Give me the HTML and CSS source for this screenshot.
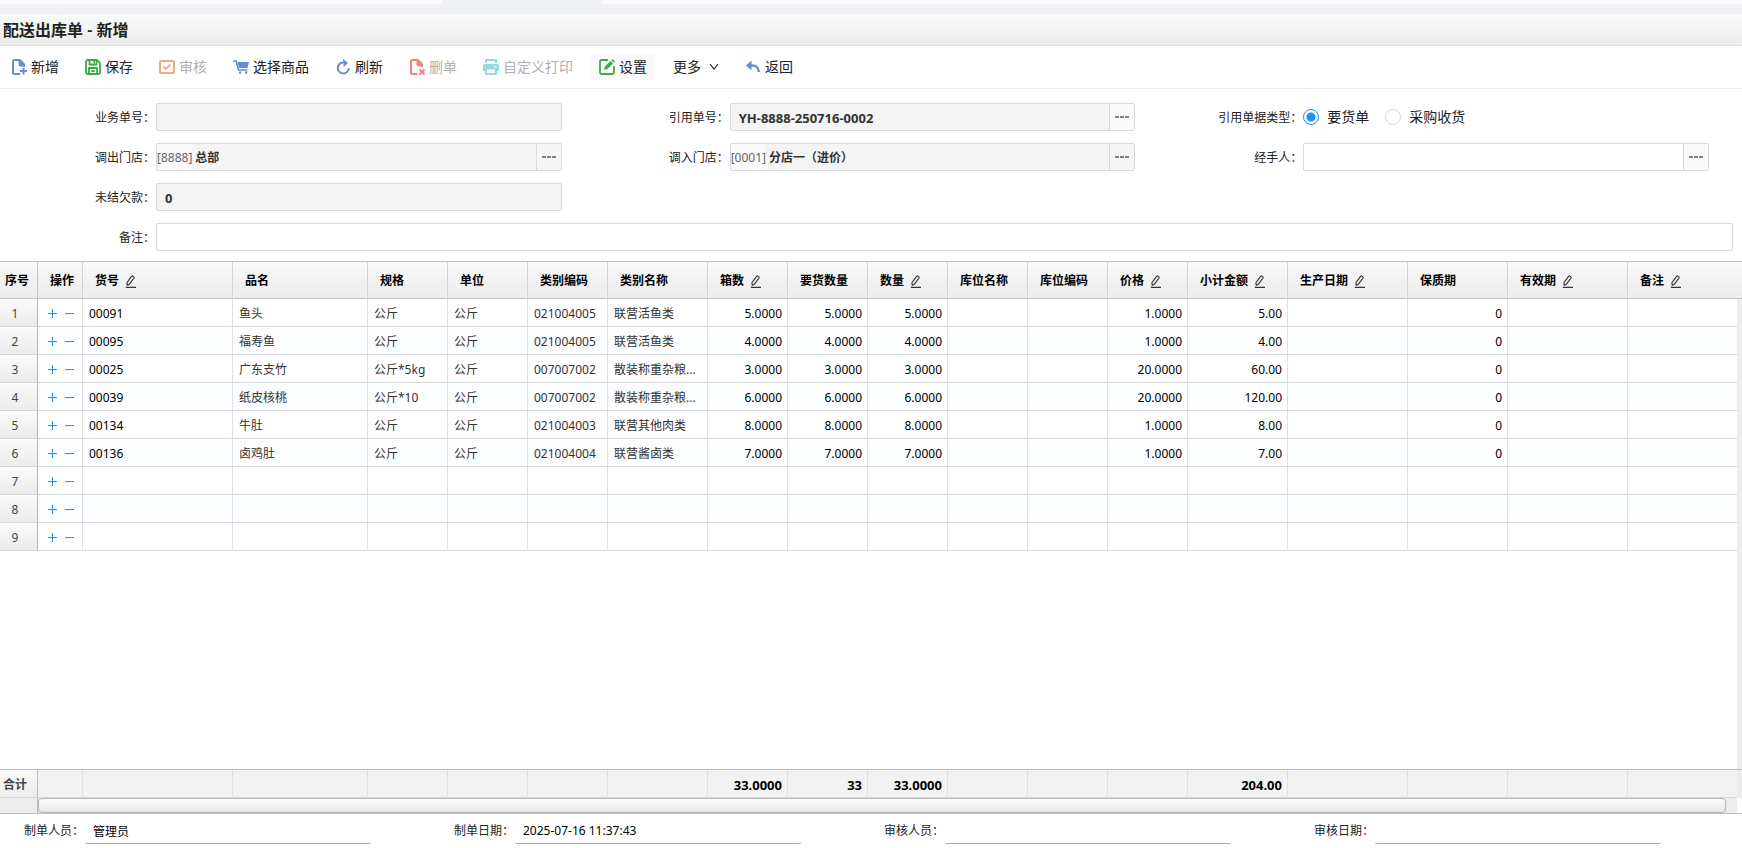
FILE: index.html
```html
<!DOCTYPE html>
<html lang="zh-CN">
<head>
<meta charset="utf-8">
<title>配送出库单 - 新增</title>
<link rel="stylesheet" href="styles.css">
</head>
<body>
<svg class="defs" aria-hidden="true">
  <symbol id="pencil" viewBox="0 0 12 13"><path d="M2.2 10.2 1.9 7.6 6.6 1.3q.5-.6 1.2-.2l1 .7q.6.5.2 1.2L4.400 9.200z M.8 12.400H11" fill="none" stroke="currentColor" stroke-width="1.100"/></symbol>
  <symbol id="plus" viewBox="0 0 9 9"><path d="M0 4.500H9M4.500 0V9" stroke="currentColor"/></symbol>
  <symbol id="minus" viewBox="0 0 9 9"><path d="M0 4.500H9" stroke="currentColor"/></symbol>
  <symbol id="dots" viewBox="0 0 14 2"><path d="M0 0h4v2H0zM5 0h4v2H5zM10 0h4v2h-4z" fill="currentColor"/></symbol>
</svg>

<nav class="tabs"><span class="tabs-left"></span><span class="tabs-active"></span><span class="tabs-right"></span></nav>
<header class="title"><h1>配送出库单 - 新增</h1></header>

<div class="toolbar">
  <button class="tool blue"><svg viewBox="0 0 16 16"><path d="M9 15H3.500Q2 15 2 13.500V2.500Q2 1 3.500 1H8.500L13 5.500V8" fill="none" stroke="currentColor" stroke-width="2"/><path d="M7.500 0H9l5 5v2.500H10Q7.500 7.500 7.500 5zM11.500 9h2v2H16v2h-2.500v2.500h-2V13H9v-2h2.500z" fill="currentColor"/></svg><span>新增</span></button>
  <button class="tool green"><svg viewBox="0 0 16 16"><path d="M1 3Q1 1 3 1H12L15 4V13Q15 15 13 15H3Q1 15 1 13zM4.500 1V5.500H11.500V1M4 15V9H12V15M6.500 12H9.500" fill="none" stroke="currentColor" stroke-width="1.800"/><path d="M8.500 2h1.500v2.500H8.500z" fill="currentColor"/></svg><span>保存</span></button>
  <button class="tool orange" disabled><svg viewBox="0 0 16 16"><rect x="1" y="2" width="14" height="12" rx="1" fill="none" stroke="currentColor" stroke-width="2"/><path d="M4.500 7.500 7 10l4.500-4.500" fill="none" stroke="currentColor" stroke-width="1.800"/></svg><span>审核</span></button>
  <button class="tool blue"><svg viewBox="0 0 16 16"><path d="M0 2H3.200L5.500 11H14.500" fill="none" stroke="currentColor" stroke-width="1.600"/><path d="M4.500 3H16L14.500 9H6zM6 12.500h2.200v2.200H6zM12 12.500h2.200v2.200H12z" fill="currentColor"/></svg><span>选择商品</span></button>
  <button class="tool blue"><svg viewBox="0 0 16 16"><path d="M10 3.500H8A5.500 5.500 0 1 0 13.800 9" fill="none" stroke="currentColor" stroke-width="2"/><path d="M8 0 13 4 8.500 8V5l1.500-1.500L8 2z" fill="currentColor"/></svg><span>刷新</span></button>
  <button class="tool red" disabled><svg viewBox="0 0 16 16"><path d="M8.500 15H3.500Q2 15 2 13.500V2.500Q2 1 3.500 1H8.500L13 5.500V8" fill="none" stroke="currentColor" stroke-width="2"/><path d="M7.500 0H9l5 5v2.500H10Q7.500 7.500 7.500 5z" fill="currentColor"/><path d="M10.500 10.500l5 5M15.500 10.500l-5 5" stroke="currentColor" stroke-width="2"/></svg><span>删单</span></button>
  <button class="tool teal" disabled><svg viewBox="0 0 16 16"><path d="M2 0H14V4H2zM4 2V4H12V2zM2 5H14Q16 5 16 7V12H14V16H2V12H0V7Q0 5 2 5zM4 10.500V14H12V10.500zM11.500 7v1.500h2V7z" fill="currentColor" fill-rule="evenodd"/></svg><span>自定义打印</span></button>
  <button class="tool green hover"><svg viewBox="0 0 16 16"><path d="M9 1H2.500Q1 1 1 2.500V13.500Q1 15 2.500 15H13.500Q15 15 15 13.500V7" fill="none" stroke="currentColor" stroke-width="1.800"/><path d="M5 11 6 7.500 11.500 2 14 4.500 8.500 10zM12.300 1.200 13.500 0 16 2.500 14.800 3.700z" fill="currentColor"/></svg><span>设置</span></button>
  <button class="tool more"><span>更多</span><svg viewBox="0 0 10 10"><path d="M1 2 5 7 9 2" fill="none" stroke="currentColor" stroke-width="1.200"/></svg></button>
  <button class="tool blue"><svg viewBox="0 0 16 16"><path d="M1 6.500 6.500 1.500V11.500z" fill="currentColor"/><path d="M6 6.500Q13.500 6 13.800 13" fill="none" stroke="currentColor" stroke-width="2.400"/></svg><span>返回</span></button>
</div>

<form class="form">
  <div class="field"><label for="f1">业务单号：</label><div class="box off"><input id="f1" readonly></div></div>
  <div class="field"><label for="f2">引用单号：</label><div class="box off"><input id="f2" class="figure" value="YH-8888-250716-0002" readonly><button type="button" class="pick" aria-label="选择"><svg><use href="#dots"/></svg></button></div></div>
  <div class="field"><span class="lbl">引用单据类型：</span><div class="radios"><label><input type="radio" name="t" checked>要货单</label><label><input type="radio" name="t">采购收货</label></div></div>
  <div class="field"><label for="f3">调出门店：</label><div class="box off"><span class="code">[8888]</span><input id="f3" class="near" value="总部" readonly><button type="button" class="pick grey" aria-label="选择"><svg><use href="#dots"/></svg></button></div></div>
  <div class="field"><label for="f4">调入门店：</label><div class="box off"><span class="code">[0001]</span><input id="f4" class="near" value="分店一（进价）" readonly><button type="button" class="pick grey" aria-label="选择"><svg><use href="#dots"/></svg></button></div></div>
  <div class="field"><label for="f5">经手人：</label><div class="box"><input id="f5"><button type="button" class="pick" aria-label="选择"><svg><use href="#dots"/></svg></button></div></div>
  <div class="field first"><label for="f6">未结欠款：</label><div class="box off"><input id="f6" class="figure" value="0" readonly></div></div>
  <div class="field wide"><label for="f7">备注：</label><div class="box"><input id="f7"></div></div>
</form>

<main class="grid">
<table>
<colgroup><col class="c-no"><col class="c-op"><col class="c-150"><col class="c-135"><col class="c-80"><col class="c-80"><col class="c-80"><col class="c-100"><col class="c-80"><col class="c-80"><col class="c-80"><col class="c-80"><col class="c-80"><col class="c-80"><col class="c-100"><col class="c-120"><col class="c-100"><col class="c-120"><col><col class="c-gut"></colgroup>
<thead><tr><th class="no">序号</th><th>操作</th><th>货号<svg><use href="#pencil"/></svg></th><th>品名</th><th>规格</th><th>单位</th><th>类别编码</th><th>类别名称</th><th>箱数<svg><use href="#pencil"/></svg></th><th>要货数量</th><th>数量<svg><use href="#pencil"/></svg></th><th>库位名称</th><th>库位编码</th><th>价格<svg><use href="#pencil"/></svg></th><th>小计金额<svg><use href="#pencil"/></svg></th><th>生产日期<svg><use href="#pencil"/></svg></th><th>保质期</th><th>有效期<svg><use href="#pencil"/></svg></th><th class="last">备注<svg><use href="#pencil"/></svg></th><th class="last"></th></tr></thead>
<tbody>
<tr><td class="no">1</td><td class="op"><button aria-label="增行"><svg><use href="#plus"/></svg></button><button aria-label="删行"><svg><use href="#minus"/></svg></button></td><td class="ed">00091</td><td>鱼头</td><td>公斤</td><td>公斤</td><td>021004005</td><td>联营活鱼类</td><td class="num">5.0000</td><td class="num">5.0000</td><td class="num">5.0000</td><td></td><td></td><td class="num">1.0000</td><td class="num">5.00</td><td></td><td class="num">0</td><td></td><td class="last"></td><td class="gut" rowspan="9"></td></tr>
<tr><td class="no">2</td><td class="op"><button aria-label="增行"><svg><use href="#plus"/></svg></button><button aria-label="删行"><svg><use href="#minus"/></svg></button></td><td class="ed">00095</td><td>福寿鱼</td><td>公斤</td><td>公斤</td><td>021004005</td><td>联营活鱼类</td><td class="num">4.0000</td><td class="num">4.0000</td><td class="num">4.0000</td><td></td><td></td><td class="num">1.0000</td><td class="num">4.00</td><td></td><td class="num">0</td><td></td><td class="last"></td></tr>
<tr><td class="no">3</td><td class="op"><button aria-label="增行"><svg><use href="#plus"/></svg></button><button aria-label="删行"><svg><use href="#minus"/></svg></button></td><td class="ed">00025</td><td>广东支竹</td><td>公斤*5kg</td><td>公斤</td><td>007007002</td><td>散装称重杂粮...</td><td class="num">3.0000</td><td class="num">3.0000</td><td class="num">3.0000</td><td></td><td></td><td class="num">20.0000</td><td class="num">60.00</td><td></td><td class="num">0</td><td></td><td class="last"></td></tr>
<tr><td class="no">4</td><td class="op"><button aria-label="增行"><svg><use href="#plus"/></svg></button><button aria-label="删行"><svg><use href="#minus"/></svg></button></td><td class="ed">00039</td><td>纸皮核桃</td><td>公斤*10</td><td>公斤</td><td>007007002</td><td>散装称重杂粮...</td><td class="num">6.0000</td><td class="num">6.0000</td><td class="num">6.0000</td><td></td><td></td><td class="num">20.0000</td><td class="num">120.00</td><td></td><td class="num">0</td><td></td><td class="last"></td></tr>
<tr><td class="no">5</td><td class="op"><button aria-label="增行"><svg><use href="#plus"/></svg></button><button aria-label="删行"><svg><use href="#minus"/></svg></button></td><td class="ed">00134</td><td>牛肚</td><td>公斤</td><td>公斤</td><td>021004003</td><td>联营其他肉类</td><td class="num">8.0000</td><td class="num">8.0000</td><td class="num">8.0000</td><td></td><td></td><td class="num">1.0000</td><td class="num">8.00</td><td></td><td class="num">0</td><td></td><td class="last"></td></tr>
<tr><td class="no">6</td><td class="op"><button aria-label="增行"><svg><use href="#plus"/></svg></button><button aria-label="删行"><svg><use href="#minus"/></svg></button></td><td class="ed">00136</td><td>卤鸡肚</td><td>公斤</td><td>公斤</td><td>021004004</td><td>联营酱卤类</td><td class="num">7.0000</td><td class="num">7.0000</td><td class="num">7.0000</td><td></td><td></td><td class="num">1.0000</td><td class="num">7.00</td><td></td><td class="num">0</td><td></td><td class="last"></td></tr>
<tr><td class="no">7</td><td class="op"><button aria-label="增行"><svg><use href="#plus"/></svg></button><button aria-label="删行"><svg><use href="#minus"/></svg></button></td><td></td><td></td><td></td><td></td><td></td><td></td><td></td><td></td><td></td><td></td><td></td><td></td><td></td><td></td><td></td><td></td><td class="last"></td></tr>
<tr><td class="no">8</td><td class="op"><button aria-label="增行"><svg><use href="#plus"/></svg></button><button aria-label="删行"><svg><use href="#minus"/></svg></button></td><td></td><td></td><td></td><td></td><td></td><td></td><td></td><td></td><td></td><td></td><td></td><td></td><td></td><td></td><td></td><td></td><td class="last"></td></tr>
<tr><td class="no">9</td><td class="op"><button aria-label="增行"><svg><use href="#plus"/></svg></button><button aria-label="删行"><svg><use href="#minus"/></svg></button></td><td></td><td></td><td></td><td></td><td></td><td></td><td></td><td></td><td></td><td></td><td></td><td></td><td></td><td></td><td></td><td></td><td class="last"></td></tr>
</tbody>
</table>
</main>

<section class="totals">
<table>
<colgroup><col class="c-no"><col class="c-op"><col class="c-150"><col class="c-135"><col class="c-80"><col class="c-80"><col class="c-80"><col class="c-100"><col class="c-80"><col class="c-80"><col class="c-80"><col class="c-80"><col class="c-80"><col class="c-80"><col class="c-100"><col class="c-120"><col class="c-100"><col class="c-120"><col><col class="c-gut"></colgroup>
<tbody><tr><td class="no">合计</td><td></td><td></td><td></td><td></td><td></td><td></td><td></td><td class="num">33.0000</td><td class="num">33</td><td class="num">33.0000</td><td></td><td></td><td></td><td class="num">204.00</td><td></td><td></td><td></td><td class="last"></td><td class="gut"></td></tr></tbody>
</table>
<div class="scroll"><div class="corner"></div><div class="track"><div class="thumb"></div></div></div>
</section>

<footer class="meta">
  <div><label for="m1">制单人员：</label><input id="m1" value="管理员"></div>
  <div><label for="m2">制单日期：</label><input id="m2" value="2025-07-16 11:37:43"></div>
  <div><label for="m3">审核人员：</label><input id="m3"></div>
  <div><label for="m4">审核日期：</label><input id="m4"></div>
</footer>
</body>
</html>
```

FILE: styles.css
```css
* { box-sizing: border-box; }
body {
  margin: 0;
  min-height: 100vh;
  display: flex;
  flex-direction: column;
  background: #fff;
  color: #222;
  font: 12px/18px "Noto Sans", "Noto Sans CJK SC", sans-serif;
}
button, input { font: inherit; color: inherit; }
button { border: 0; padding: 0; background: none; }
.defs { position: absolute; width: 0; height: 0; }

/* tab strip and title */
.tabs { display: flex; height: 14px; background: #eff1f5; }
.tabs span { height: 4px; }
.tabs-left { width: 442px; background: #fafaf8; }
.tabs-active { width: 159px; }
.tabs-right { flex: 1; background: #fafaf8; }
.title {
  height: 32px;
  padding: 1px 3px 0;
  background: linear-gradient(#f9fafa, #ececec);
  border-bottom: 1px solid #dcdcdc;
}
.title h1 { margin: 0; font-size: 16px; line-height: 30px; font-weight: 600; }

/* toolbar */
.toolbar {
  display: flex;
  align-items: center;
  gap: 10px;
  height: 43px;
  padding: 0 3px;
  border-bottom: 1px solid #ededed;
}
.tool {
  display: flex;
  align-items: center;
  gap: 4px;
  height: 26px;
  padding: 0 8px;
  font-size: 14px;
  line-height: 20px;
}
.tool svg { width: 16px; height: 16px; }
.tool.more { gap: 8px; }
.tool.more svg { width: 10px; height: 10px; }
.tool:disabled span { color: #b0b0b0; }
.hover { background: #fafafa; border-radius: 2px; }
.blue svg { color: #6b8bd9; }
.green svg { color: #3ea948; }
.orange svg { color: #f2a983; }
.red svg { color: #f08484; }
.teal svg { color: #98d8e2; }

/* form */
.form {
  display: grid;
  grid-template-columns: repeat(3, 1fr);
  row-gap: 12px;
  padding: 14px 21px 10px 0;
}
.field { display: flex; align-items: center; height: 28px; padding-right: 12px; }
.field > label, .lbl { width: 156px; padding: 2px 1px 0 0; text-align: right; flex: none; }
.field.first { grid-column: 1; }
.field.wide { grid-column: 1 / -1; padding-right: 0; margin-right: -12px; }
.box {
  flex: 1;
  min-width: 0;
  display: flex;
  height: 28px;
  border: 1px solid #d9d9d9;
  border-radius: 2px;
  background: #fff;
}
.box.off { background: #f4f4f4; }
.box input {
  flex: 1;
  min-width: 0;
  border: 0;
  outline: 0;
  background: none;
  padding: 2px 8px 0;
  font-weight: 700;
  color: #333;
}
.box input.near { padding-left: 3px; }
.box input.figure { font-size: 13px; }
.code { padding-top: 1px; background: #fafafa; color: #666; line-height: 25px; }
.pick {
  width: 25px;
  border-left: 1px solid #d9d9d9;
  background: #fafafa;
  color: #808080;
  display: flex;
  align-items: center;
  justify-content: center;
}
.pick.grey { background: #f5f5f5; }
.pick svg { width: 14px; height: 2px; }
.radios { display: flex; gap: 16px; font-size: 14px; line-height: 20px; }
.radios label { display: flex; align-items: center; gap: 8px; }
.radios input {
  appearance: none;
  width: 16px;
  height: 16px;
  margin: 0;
  border: 1px solid #d9d9d9;
  border-radius: 50%;
}
.radios input:checked {
  border-color: #1890ff;
  background: radial-gradient(circle, #1890ff 4px, #fff 5px);
}

/* data grid */
.grid {
  flex: 1;
  border-top: 1px solid #bfc5c7;
  background: linear-gradient(#ececec, #ececec) right / 5px 100% no-repeat;
}
table { width: 100%; table-layout: fixed; border-collapse: separate; border-spacing: 0; }
.c-no { width: 38px; }
.c-op { width: 45px; }
.c-80 { width: 80px; }
.c-100 { width: 100px; }
.c-120 { width: 120px; }
.c-135 { width: 135px; }
.c-150 { width: 150px; }
.c-gut { width: 5px; }
th {
  height: 37px;
  padding: 2px 0 0 12px;
  text-align: left;
  white-space: nowrap;
  color: #000;
  background: linear-gradient(#f9f9f9, #ececec);
  border-right: 1px solid #d3d3d3;
  border-bottom: 1px solid #bfc5c7;
}
th.no { padding-left: 5px; border-right-color: #c0c0c0; }
th svg { width: 12px; height: 13px; margin-left: 6px; vertical-align: -3px; color: #333; }
td {
  height: 28px;
  padding: 2px 5px 0 6px;
  white-space: nowrap;
  overflow: hidden;
  color: #333;
  background: #fff;
  border-right: 1px solid #dfe0ea;
  border-bottom: 1px solid #d5d9db;
}
tr:nth-child(even) td { background: #fbfdff; }
td.ed, td.num { color: #000; }
td.num { text-align: right; }
th.last, td.last { border-right: 0; }
tr td.no {
  padding: 2px 7px 0 0;
  text-align: center;
  color: #444;
  background: linear-gradient(#fafafa, #ececec);
  border-right-color: #b8b8b8;
}
td.op { padding: 2px 8px 0 10px; font-size: 0; line-height: 9px; }
.op button { width: 9px; height: 9px; vertical-align: top; color: #1e95dd; }
.op button + button { margin-left: 8px; }
.op svg { display: block; width: 9px; height: 9px; }
td.gut { padding: 0; background: none; border: 0; }

/* totals and scrollbar */
.totals { border-top: 1px solid #bfc1c1; border-bottom: 1px solid #bfc1c1; }
.totals td { background: #f2f2f2; font-weight: 700; }
.totals td.num { font-size: 13px; }
.totals td.gut { background: #ececec; }
.scroll { display: flex; height: 15px; margin-right: 5px; background: #ececec; }
.corner { width: 38px; border-right: 1px solid #b8b8b8; }
.track { flex: 1; padding-right: 11px; }
.thumb {
  height: 15px;
  border: 1px solid #b5b5b5;
  border-radius: 4px;
  background: linear-gradient(#fbfbfb, #e8e8e8);
}

/* document meta */
.meta { display: grid; grid-template-columns: repeat(4, 1fr); padding: 2px 22px 4px 0; }
.meta div { display: flex; align-items: center; padding-right: 59px; }
.meta label { width: 85px; flex: none; padding: 2px 1px 0 0; text-align: right; }
.meta input {
  flex: 1;
  min-width: 0;
  height: 28px;
  padding: 2px 8px 0;
  border: 0;
  border-bottom: 1px solid #aaa;
  border-radius: 2px;
  outline: 0;
  background: none;
  color: #000;
}
```
